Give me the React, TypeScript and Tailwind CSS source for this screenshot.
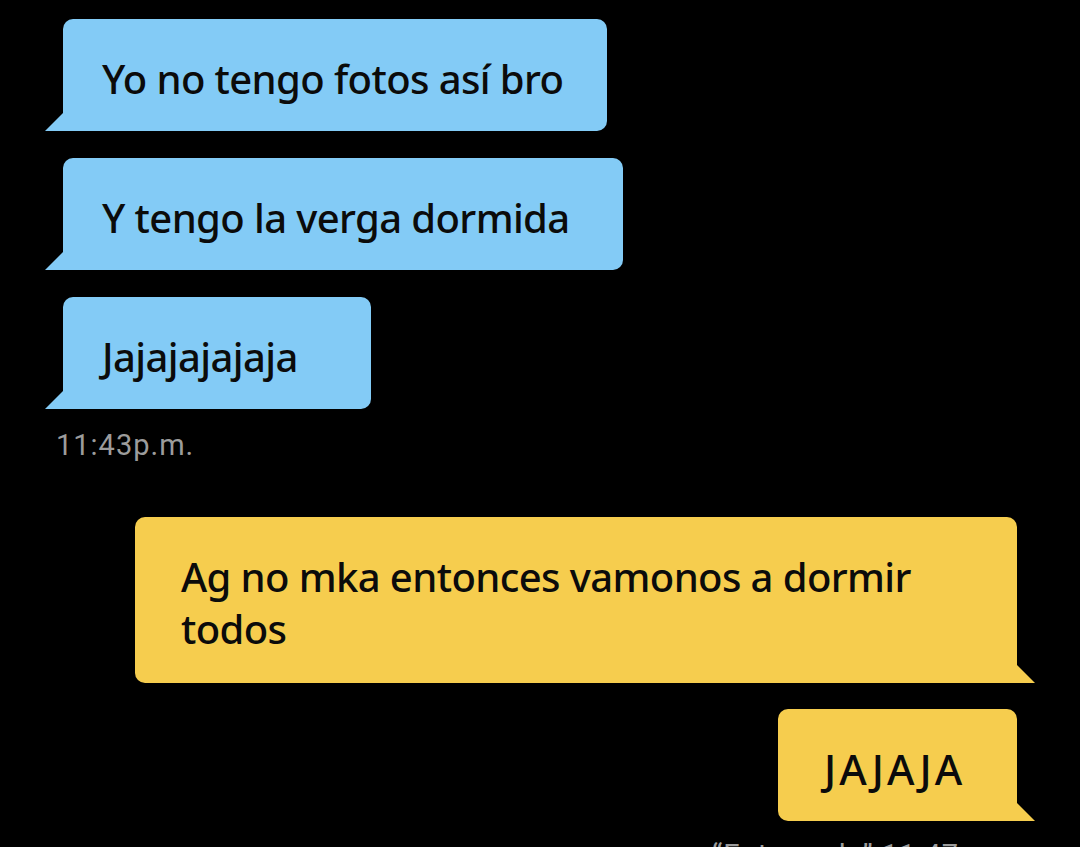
import React from "react";

const font = { fontFamily: '"Noto Sans", "Open Sans", sans-serif' };
const meta = { fontFamily: '"Roboto", "Noto Sans", sans-serif' };

function Blue({ text, className = "" }: { text: string; className?: string }) {
  return (
    <div className={`relative self-start rounded-[10px] rounded-bl-none bg-[#83cbf6] pl-[39px] pt-[34px] pb-[26px] text-[40px] leading-[52px] tracking-[-0.6px] font-medium text-[#0b0b0b] whitespace-nowrap ${className}`}>
      {text}
      <svg className="absolute bottom-0 left-[-18px]" width="18" height="18" viewBox="0 0 18 18">
        <polygon points="18,0 18,18 0,18" fill="#83cbf6" />
      </svg>
    </div>
  );
}

function Yellow({ children, className = "" }: { children: React.ReactNode; className?: string }) {
  return (
    <div className={`relative self-end rounded-[10px] rounded-br-none bg-[#f6cd4e] pt-[34px] leading-[52px] font-medium text-[#0b0b0b] whitespace-nowrap ${className}`}>
      {children}
      <svg className="absolute bottom-0 right-[-18px]" width="18" height="18" viewBox="0 0 18 18">
        <polygon points="0,0 0,18 18,18" fill="#f6cd4e" />
      </svg>
    </div>
  );
}

export default function App() {
  return (
    <div className="w-[1080px] h-[847px] overflow-hidden bg-black flex flex-col pt-[19px]" style={font}>
      <div className="flex flex-col gap-[27px] pl-[63px]">
        <Blue text="Yo no tengo fotos así bro" className="w-[544px]" />
        <Blue text="Y tengo la verga dormida" className="w-[560px]" />
        <Blue text="Jajajajajaja" className="w-[308px]" />
      </div>
      <div className="ml-[56px] mt-[16px] text-[29px] leading-[40px] tracking-[1px] text-[#9c9c9c]" style={meta}>
        11:43p.m.
      </div>
      <div className="flex flex-col gap-[26px] pr-[63px] mt-[52px]">
        <Yellow className="w-[882px] pl-[46px] pb-[28px] text-[40px] tracking-[-0.6px]">
          Ag no mka entonces vamonos a dormir
          <br />
          todos
        </Yellow>
        <Yellow className="w-[239px] pl-[46px] pb-[26px] text-[42px] tracking-[3px]">JAJAJA</Yellow>
      </div>
      <div className="self-end mr-[60px] mt-[14px] text-[29px] leading-[40px] tracking-[1px] text-[#9c9c9c]" style={meta}>
        “Entregado” 11:47p.m.
      </div>
    </div>
  );
}
